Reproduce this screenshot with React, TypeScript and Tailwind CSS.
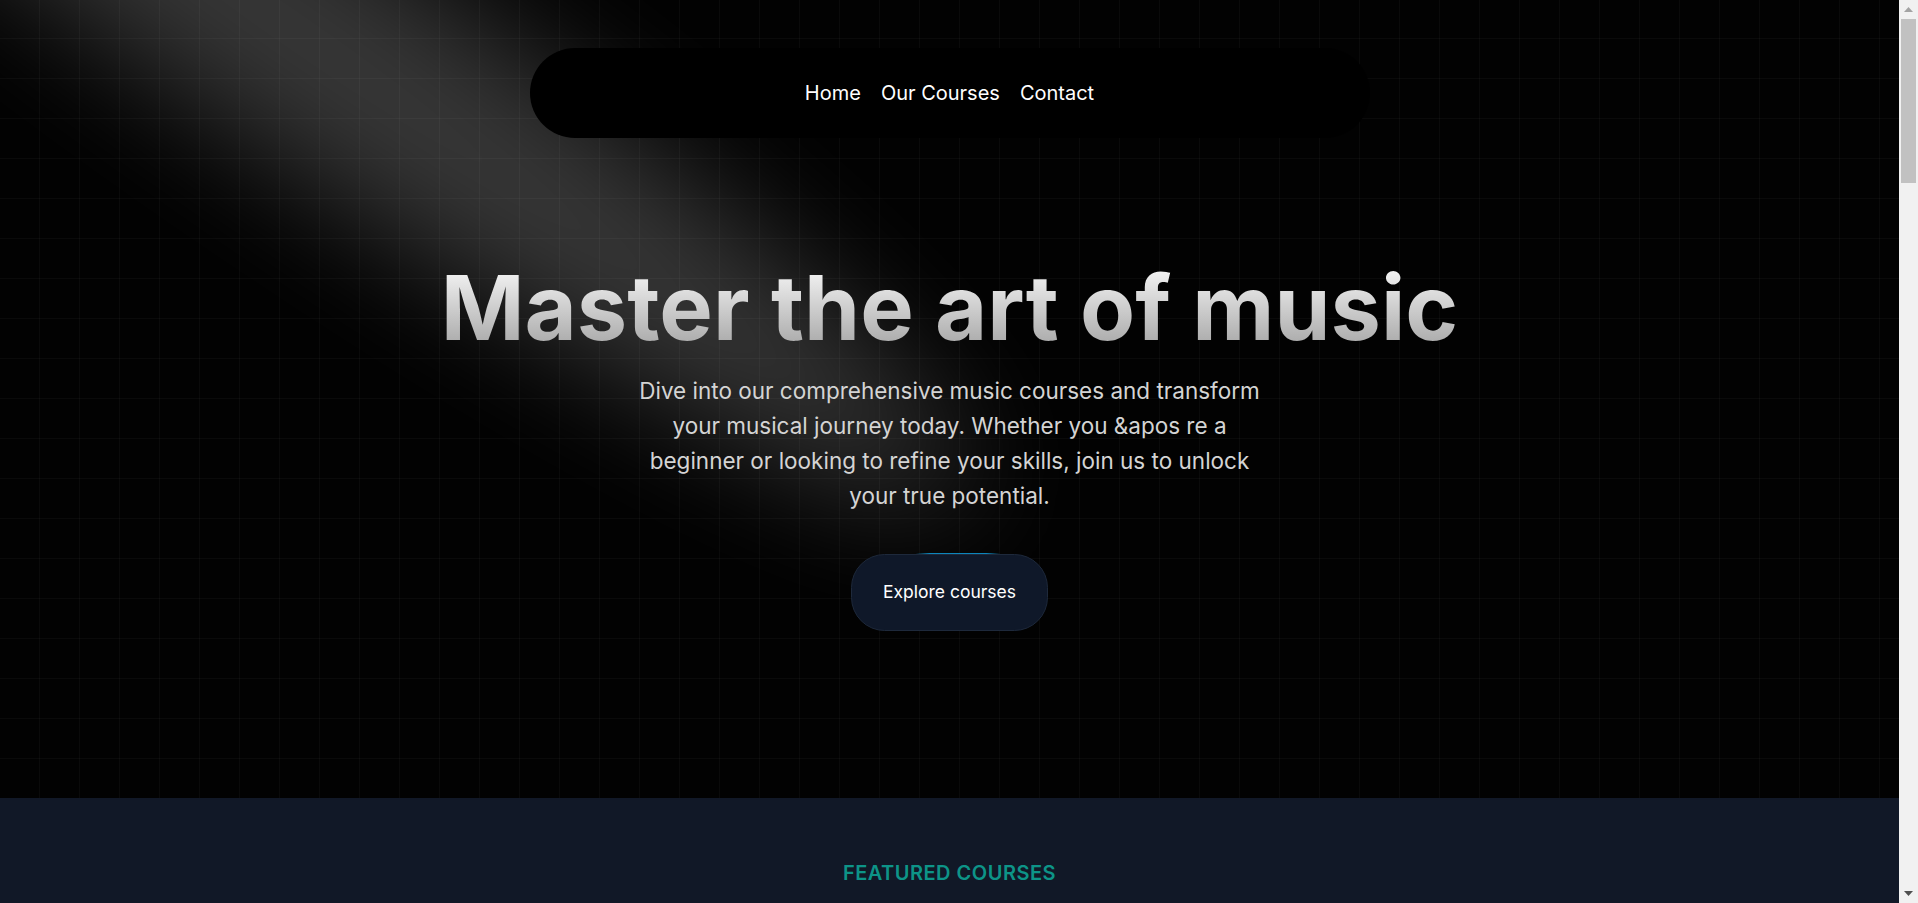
import React from "react";

const courses = [
  { title: "Guitar Fundamentals", description: "Learn the basics of guitar playing with our comprehensive beginner course.", price: 99, instructor: "John Doe" },
  { title: "Piano for Beginners", description: "Start your musical journey with our easy-to-follow piano lessons.", price: 109, instructor: "Jane Smith" },
  { title: "Advanced Vocal Techniques", description: "Enhance your singing skills with advanced vocal training.", price: 129, instructor: "Emily Johnson" },
  { title: "Drumming Masterclass", description: "Master the drums with our expert-led masterclass.", price: 119, instructor: "Michael Brown" },
  { title: "Music Theory 101", description: "Understand the fundamentals of music theory and composition.", price: 89, instructor: "Sarah Davis" },
  { title: "Electronic Music Production", description: "Learn how to produce electronic music using modern software.", price: 149, instructor: "David Wilson" },
];

const webinars = [
  { title: "Understanding Music Theory", description: "Dive deep into the fundamentals of music theory." },
  { title: "The Art of Songwriting", description: "Learn the craft of songwriting from experienced musicians." },
  { title: "Mastering Your Instrument", description: "Advanced techniques to master your musical instrument." },
  { title: "Music Production Essentials", description: "Get started with music production with this comprehensive overview." },
];

const reasons = [
  { title: "Discover the Joy of Music", description: "Embark on a musical journey that transcends boundaries." },
  { title: "Expert Instructors", description: "Learn from seasoned musicians who bring real-world experience." },
  { title: "Flexible Scheduling", description: "Study at your own pace with lessons that fit your life." },
];

function Spotlight() {
  return (
    <svg
      className="pointer-events-none absolute left-[300px] top-[-100px] z-[1] h-[169%] w-[84%] -translate-x-1/2 -translate-y-[40%]"
      xmlns="http://www.w3.org/2000/svg"
      viewBox="0 0 3787 2842"
      fill="none"
    >
      <g filter="url(#spotlight-blur)">
        <ellipse
          cx="1924.71"
          cy="273.501"
          rx="1924.71"
          ry="273.501"
          transform="matrix(-0.822377 -0.568943 -0.568943 0.822377 3631.88 2291.09)"
          fill="white"
          fillOpacity="0.21"
        />
      </g>
      <defs>
        <filter
          id="spotlight-blur"
          x="0.860352"
          y="0.838989"
          width="3785.16"
          height="2840.26"
          filterUnits="userSpaceOnUse"
          colorInterpolationFilters="sRGB"
        >
          <feFlood floodOpacity="0" result="BackgroundImageFix" />
          <feBlend mode="normal" in="SourceGraphic" in2="BackgroundImageFix" result="shape" />
          <feGaussianBlur stdDeviation="151" result="blur" />
        </filter>
      </defs>
    </svg>
  );
}

function Navbar() {
  return (
    <div className="fixed left-0 right-[19px] top-[48px] z-50 mx-auto max-w-[840px]">
      <nav className="relative flex justify-center gap-5 rounded-full bg-black px-10 py-[30px]">
        {["Home", "Our Courses", "Contact"].map((item) => (
          <p key={item} className="cursor-pointer text-[20px] leading-[30px] text-white">
            {item}
          </p>
        ))}
      </nav>
    </div>
  );
}

function FakeScrollbar() {
  return (
    <div className="fixed right-0 top-0 z-[60] flex h-screen w-[19px] flex-col bg-[#f1f1f1]">
      <div className="flex h-[19px] items-center justify-center">
        <svg width="9" height="5" viewBox="0 0 9 5">
          <path d="M4.5 0L9 5H0z" fill="#a3a3a3" />
        </svg>
      </div>
      <div className="px-[2px]">
        <div className="h-[164px] bg-[#c1c1c1]" />
      </div>
      <div className="flex-1" />
      <div className="flex h-[19px] items-center justify-center">
        <svg width="9" height="5" viewBox="0 0 9 5">
          <path d="M0 0H9L4.5 5z" fill="#505050" />
        </svg>
      </div>
    </div>
  );
}

function ExploreButton() {
  return (
    <button className="relative mx-auto block h-[80px] w-[200px] overflow-hidden rounded-[35px] bg-transparent p-[1.25px]">
      <div className="absolute inset-0 rounded-[33.6px]">
        <div className="absolute left-[58px] top-[-50px] h-[100px] w-[100px] bg-[radial-gradient(#0ea5e9_40%,transparent_60%)] opacity-80" />
      </div>
      <div className="relative flex h-full w-full items-center justify-center rounded-[33.6px] border border-[#1e293b] bg-[#0f1829] text-[17.5px] text-white antialiased">
        Explore courses
      </div>
    </button>
  );
}

function Hero() {
  return (
    <div className="relative flex h-[798px] w-full flex-col items-center justify-center overflow-hidden">
      <Spotlight />
      <div className="relative z-10 w-full p-5 text-center">
        <h1 className="mt-[102px] bg-linear-to-b from-[#fafafa] to-[#a3a3a3] bg-clip-text text-[90px] font-bold leading-[90px] text-transparent">
          Master the art of music
        </h1>
        <p className="mx-auto mt-5 max-w-[640px] text-[22.5px] font-normal leading-[35px] text-[#d4d4d4]">
          {"Dive into our comprehensive music courses and transform your musical journey today. Whether you &apos re a beginner or looking to refine your skills, join us to unlock your true potential."}
        </p>
        <div className="mt-10 pb-[5px]">
          <ExploreButton />
        </div>
      </div>
    </div>
  );
}

function Featured() {
  return (
    <section className="h-[1430px] bg-[#111827] py-[60px]">
      <div className="text-center">
        <h2 className="text-[20px] font-semibold uppercase leading-[30px] tracking-wide text-[#0d9488]">
          FEATURED COURSES
        </h2>
        <p className="mt-[10px] text-[45px] font-extrabold leading-[50px] tracking-tight text-white">
          Learn With the Best
        </p>
      </div>
      <div className="mx-auto mt-[50px] grid max-w-[1400px] grid-cols-3 gap-10 px-10">
        {courses.map((c) => (
          <div key={c.title} className="flex h-[500px] flex-col items-center justify-center rounded-[28px] bg-zinc-900 p-10 text-center">
            <p className="text-[22px] text-neutral-200">{c.title}</p>
            <p className="mt-4 flex-grow text-[17px] text-neutral-400">{c.description}</p>
            <p className="mt-4 text-[15px] text-neutral-500">{c.instructor} · ${c.price}</p>
          </div>
        ))}
      </div>
      <div className="mt-[30px] text-center">
        <button className="rounded-[10px] border border-neutral-700 px-5 py-[10px] text-[17px] text-white">
          View All courses
        </button>
      </div>
    </section>
  );
}

function WhyChooseUs() {
  return (
    <section className="flex h-[900px] items-center justify-center gap-20 bg-[#0f172a] px-20">
      <div className="max-w-[600px]">
        {reasons.map((r) => (
          <div key={r.title} className="my-[100px]">
            <h2 className="text-[30px] font-bold text-slate-100">{r.title}</h2>
            <p className="mt-5 text-[20px] text-slate-300">{r.description}</p>
          </div>
        ))}
      </div>
      <div className="h-[400px] w-[400px] rounded-[10px] bg-linear-to-br from-cyan-500 to-emerald-500" />
    </section>
  );
}

function Testimonials() {
  return (
    <section className="flex h-[700px] flex-col items-center justify-center">
      <h2 className="mb-10 text-center text-[40px] font-bold text-white">Hear our Harmony: Voices of success</h2>
      <div className="flex gap-8">
        {["Joining the music school transformed my understanding of music.", "The instructors are amazing and truly passionate.", "I never thought I could learn piano this fast."].map((q) => (
          <div key={q} className="w-[420px] rounded-2xl border border-slate-700 bg-slate-900 p-8 text-[18px] text-gray-100">
            {q}
          </div>
        ))}
      </div>
    </section>
  );
}

function Webinars() {
  return (
    <section className="h-[650px] bg-[#111827] py-[60px]">
      <div className="text-center">
        <h2 className="text-[20px] font-semibold uppercase tracking-wide text-[#0d9488]">FEATURED WEBINARS</h2>
        <p className="mt-[10px] text-[45px] font-extrabold tracking-tight text-white">Enhance Your Musical Journey</p>
      </div>
      <div className="mx-auto mt-10 grid max-w-[1200px] grid-cols-2 gap-6 px-10">
        {webinars.map((w) => (
          <div key={w.title} className="rounded-xl border border-slate-700 p-6">
            <p className="text-[22px] font-bold text-zinc-100">{w.title}</p>
            <p className="mt-2 text-[16px] text-zinc-400">{w.description}</p>
          </div>
        ))}
      </div>
    </section>
  );
}

function Footer() {
  return (
    <footer className="h-[300px] bg-black px-20 py-12 text-gray-400">
      <div className="grid grid-cols-4 gap-8">
        <div>
          <h2 className="mb-4 text-[22px] font-semibold text-white">About Us</h2>
          <p className="text-[16px]">Music School is a premier institution dedicated to teaching the art and science of music.</p>
        </div>
        <div>
          <h2 className="mb-4 text-[22px] font-semibold text-white">Quick Links</h2>
          <p className="text-[16px]">Home · About · Courses · Contact</p>
        </div>
        <div>
          <h2 className="mb-4 text-[22px] font-semibold text-white">Follow Us</h2>
          <p className="text-[16px]">Facebook · Twitter · Instagram</p>
        </div>
        <div>
          <h2 className="mb-4 text-[22px] font-semibold text-white">Contact Us</h2>
          <p className="text-[16px]">New Delhi, India · info@musicschool.com</p>
        </div>
      </div>
      <p className="mt-10 text-center text-[15px]">© 2024 Music School. All rights reserved.</p>
    </footer>
  );
}

export default function App() {
  return (
    <div className="font-[Inter,'Noto_Sans',sans-serif] antialiased">
      <main className="mr-[19px] min-h-screen bg-[#020202] bg-[linear-gradient(to_right,transparent_38.75px,rgba(255,255,255,0.03)_38.75px),linear-gradient(to_bottom,transparent_38px,rgba(255,255,255,0.03)_38px,rgba(255,255,255,0.03)_39.25px,transparent_39.25px)] bg-[size:40px_40px]">
        <Navbar />
        <Hero />
        <Featured />
        <WhyChooseUs />
        <Testimonials />
        <Webinars />
        <Footer />
      </main>
      <FakeScrollbar />
    </div>
  );
}
